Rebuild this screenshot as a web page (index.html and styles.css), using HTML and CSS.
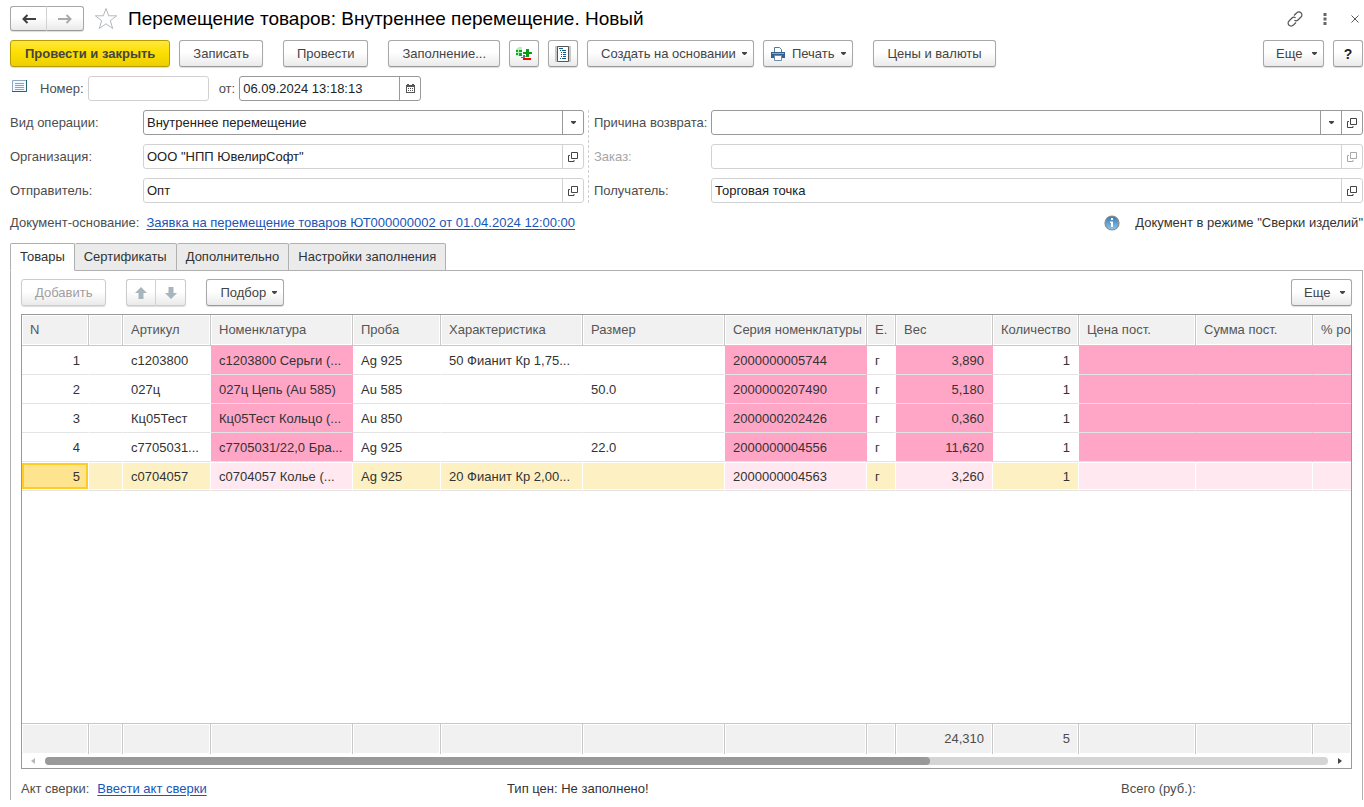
FILE: index.html
```html
<!DOCTYPE html>
<html lang="ru">
<head>
<meta charset="utf-8">
<title>Перемещение товаров: Внутреннее перемещение. Новый</title>
<link rel="stylesheet" href="styles.css">
</head>
<body>
<svg class="sprite" aria-hidden="true">
  <symbol id="open" viewBox="0 0 10 10"><path d="M3.500 .5h6v6h-6zM2 3.500H.5v6h5.500V8" fill="none" stroke="currentColor"/></symbol>
  <symbol id="caret" viewBox="0 0 5 3"><path d="M0 0h5v1L3 3H2L0 1z" fill="currentColor"/></symbol>
</svg>
<main class="page">
  <header class="title-bar">
    <div class="pair">
      <button class="btn" aria-label="Назад"><svg width="14" height="10" viewBox="0 0 14 10"><path d="M5.500 1 1.500 5l4 4M2 5h12" fill="none" stroke="#404040" stroke-width="2"/></svg></button>
      <button class="btn" aria-label="Вперед"><svg width="14" height="10" viewBox="0 0 14 10"><path d="m8.500 1 4 4-4 4M12 5H0" fill="none" stroke="#aaa" stroke-width="2"/></svg></button>
    </div>
    <button class="plain star" aria-label="Избранное"><svg width="24" height="23" viewBox="0 0 24 23"><path d="m12 1.500 2.700 7.300h8l-6.400 4.900 2.400 7.800-6.700-4.700-6.700 4.700 2.400-7.800L1.300 8.800h8z" fill="#fff" stroke="#b2b8bf"/></svg></button>
    <h1 class="title">Перемещение товаров: Внутреннее перемещение. Новый</h1>
    <div class="window-tools">
      <button class="plain" aria-label="Ссылка"><svg width="16" height="16" viewBox="0 0 16 16"><path d="M7 4.500 9.800 1.800a2.900 2.900 0 0 1 4.200 0 2.900 2.900 0 0 1 0 4.200L11 9c-1 1-2.400 1-3.600.3M9 11.500l-2.800 2.700a2.900 2.900 0 0 1-4.200 0 2.900 2.900 0 0 1 0-4.200L5 7c1-1 2.400-1 3.600-.3" fill="none" stroke="#555" stroke-width="1.200"/></svg></button>
      <button class="plain" aria-label="Меню"><svg width="4" height="12" viewBox="0 0 4 12"><path d="M.5 0h3v3h-3zM.5 4.500h3v3h-3zM.5 9h3v3h-3z" fill="#666"/></svg></button>
      <button class="plain close" aria-label="Закрыть"><svg width="8" height="8" viewBox="0 0 8 8"><path d="m.5.5 7 7m0-7-7 7" stroke="#555"/></svg></button>
    </div>
  </header>

  <div class="commands">
    <button class="btn primary">Провести и закрыть</button>
    <button class="btn">Записать</button>
    <button class="btn apart">Провести</button>
    <button class="btn apart">Заполнение...</button>
    <button class="btn icon" aria-label="Подбор строк"><svg width="18" height="16" viewBox="0 0 18 16"><path d="M1 3 4 1h3v9H1z" fill="#b8efb8"/><path d="M1 4h2v2H1zm0 3h2v2H1zm3-3h3v2H4zm0 3h3v3H4z" fill="#12a52c"/><path d="M11 3h3v3h3v2h-3v3h-3V8H8V6h3z" fill="#0a9c14"/><path d="M8 9h2v1h1l-2 3-1-1H6v-1h2z" fill="#3d7bb8"/><path d="M8 12h8v2H8z" fill="#f00"/></svg></button>
    <button class="btn icon" aria-label="Отчет"><svg width="16" height="16" viewBox="0 0 16 16"><path d="M0 0h16v16H0z" fill="#c8c8c8"/><path d="M2.500.5h11v15h-11z" fill="#fff" stroke="#555"/><path d="M4 2.500h4M5 4.500h1m1 0h4M6 6.500h1m1 0h3M6 8.500h1m1 0h3M6 10.500h1m1 0h3M5 12.500h1m1 0h4" stroke="#125b80"/></svg></button>
    <button class="btn">Создать на основании<svg class="caret"><use href="#caret"/></svg></button>
    <button class="btn print"><svg width="14" height="14" viewBox="0 0 14 14"><path d="M3.500 5V.5h5l2 2V5" fill="#fff" stroke="#50799f"/><path d="M0 5h14v6H0z" fill="#35618d"/><path d="M1 6.500h12" stroke="#86a9ca"/><path d="M3.500 8.500h7v5h-7z" fill="#fff" stroke="#6c8dac"/></svg>Печать<svg class="caret"><use href="#caret"/></svg></button>
    <button class="btn apart">Цены и валюты</button>
    <button class="btn more push">Еще<svg class="caret"><use href="#caret"/></svg></button>
    <button class="btn icon help" aria-label="Справка">?</button>
  </div>

  <div class="number-row">
    <svg class="list-icon" width="15" height="12" viewBox="0 0 15 12"><path d="M.5.5h14v11H.5z" fill="#f4f9ff" stroke="#8da9c4"/><path d="M3 3.500h9M3 5.500h9M3 7.500h9M3 9.500h9" stroke="#7fa6d0"/><path d="M14.500 0v11.500H0" fill="none" stroke="#28646c"/></svg>
    <label for="num">Номер:</label>
    <div class="field num"><input id="num"></div>
    <label for="date">от:</label>
    <div class="field strong date"><input id="date" value="06.09.2024 13:18:13"><button class="pick" aria-label="Календарь"><svg width="9" height="9" viewBox="0 0 9 9"><path d="M0 1h1V0h2v1h3V0h2v1h1v8H0z" fill="#555"/><path d="M1 3h7v5H1z" fill="#fff"/><path d="M2 4.500h5.500M2 6.500h5.500" stroke="#555" stroke-dasharray="1 1"/></svg></button></div>
  </div>

  <div class="form">
    <div class="form-side left">
      <label for="op">Вид операции:</label>
      <div class="field strong"><select id="op"><option>Внутреннее перемещение</option></select><span class="pick"><svg class="drop"><use href="#caret"/></svg></span></div>
      <label for="org">Организация:</label>
      <div class="field"><input id="org" value='ООО "НПП ЮвелирСофт"'><button class="pick" aria-label="Открыть"><svg class="open"><use href="#open"/></svg></button></div>
      <label for="from">Отправитель:</label>
      <div class="field"><input id="from" value="Опт"><button class="pick" aria-label="Открыть"><svg class="open"><use href="#open"/></svg></button></div>
    </div>
    <div class="form-side right">
      <label for="why">Причина возврата:</label>
      <div class="field strong"><select id="why"><option></option></select><span class="pick"><svg class="drop"><use href="#caret"/></svg></span><button class="pick" aria-label="Открыть"><svg class="open"><use href="#open"/></svg></button></div>
      <label for="order" class="off">Заказ:</label>
      <div class="field"><input id="order" disabled><button class="pick off" disabled aria-label="Открыть"><svg class="open"><use href="#open"/></svg></button></div>
      <label for="to">Получатель:</label>
      <div class="field"><input id="to" value="Торговая точка"><button class="pick" aria-label="Открыть"><svg class="open"><use href="#open"/></svg></button></div>
    </div>
  </div>

  <div class="basis">
    <span>Документ-основание:</span>
    <a href="#basis">Заявка на перемещение товаров ЮТ000000002 от 01.04.2024 12:00:00</a>
    <div class="mode push"><svg width="16" height="16" viewBox="0 0 16 16"><defs><linearGradient id="ball" x2="0" y2="1"><stop stop-color="#3478b0"/><stop offset="1" stop-color="#8dcaf0"/></linearGradient></defs><circle cx="8" cy="8" r="7" fill="url(#ball)" stroke="#8c8c8c" stroke-width="1.200"/><path d="M7 3h2v2H7zM6 6.500h3V12H7V8H6z" fill="#fff"/></svg><span>Документ в режиме "Сверки изделий"</span></div>
  </div>

  <div class="tabs" role="tablist">
    <button class="tab active" role="tab" aria-selected="true">Товары</button>
    <button class="tab" role="tab">Сертификаты</button>
    <button class="tab" role="tab">Дополнительно</button>
    <button class="tab" role="tab">Настройки заполнения</button>
  </div>

  <section class="panel">
    <div class="panel-bar">
      <button class="btn" disabled>Добавить</button>
      <div class="pair narrow">
        <button class="btn" disabled aria-label="Вверх"><svg width="12" height="12" viewBox="0 0 12 12"><path d="m6 0 6 6H8.500v6h-5V6H0z" fill="#a9b5bd"/></svg></button>
        <button class="btn" disabled aria-label="Вниз"><svg width="12" height="12" viewBox="0 0 12 12"><path d="m6 12 6-6H8.500V0h-5v6H0z" fill="#a9b5bd"/></svg></button>
      </div>
      <button class="btn select-items">Подбор<svg class="caret"><use href="#caret"/></svg></button>
      <button class="btn more push">Еще<svg class="caret"><use href="#caret"/></svg></button>
    </div>

    <div class="grid">
      <div class="grid-body">
        <table class="items">
          <colgroup><col class="c-n"><col class="c-mark"><col class="c-short"><col class="c-long"><col class="c-short"><col class="c-long"><col class="c-long"><col class="c-long"><col class="c-unit"><col class="c-weight"><col class="c-qty"><col class="c-sum"><col class="c-sum"><col></colgroup>
          <thead>
            <tr><th>N</th><th></th><th>Артикул</th><th>Номенклатура</th><th>Проба</th><th>Характеристика</th><th>Размер</th><th>Серия номенклатуры</th><th>Е.</th><th>Вес</th><th>Количество</th><th>Цена пост.</th><th>Сумма пост.</th><th>% ро</th></tr>
          </thead>
          <tbody>
            <tr><td class="r">1</td><td></td><td>с1203800</td><td class="pink">с1203800 Серьги (...</td><td>Ag 925</td><td>50 Фианит Кр 1,75...</td><td></td><td class="pink">2000000005744</td><td>г</td><td class="pink r">3,890</td><td class="r">1</td><td class="pink"></td><td class="pink"></td><td class="pink"></td></tr>
            <tr><td class="r">2</td><td></td><td>027ц</td><td class="pink">027ц Цепь (Au 585)</td><td>Au 585</td><td></td><td>50.0</td><td class="pink">2000000207490</td><td>г</td><td class="pink r">5,180</td><td class="r">1</td><td class="pink"></td><td class="pink"></td><td class="pink"></td></tr>
            <tr><td class="r">3</td><td></td><td>Кц05Тест</td><td class="pink">Кц05Тест Кольцо (...</td><td>Au 850</td><td></td><td></td><td class="pink">2000000202426</td><td>г</td><td class="pink r">0,360</td><td class="r">1</td><td class="pink"></td><td class="pink"></td><td class="pink"></td></tr>
            <tr><td class="r">4</td><td></td><td>с7705031...</td><td class="pink">с7705031/22,0 Бра...</td><td>Ag 925</td><td></td><td>22.0</td><td class="pink">2000000004556</td><td>г</td><td class="pink r">11,620</td><td class="r">1</td><td class="pink"></td><td class="pink"></td><td class="pink"></td></tr>
            <tr class="current"><td class="r focus">5</td><td></td><td>с0704057</td><td class="pink">с0704057 Колье (...</td><td>Ag 925</td><td>20 Фианит Кр 2,00...</td><td></td><td class="pink">2000000004563</td><td>г</td><td class="pink r">3,260</td><td class="r">1</td><td class="pink"></td><td class="pink"></td><td class="pink"></td></tr>
            <tr class="rest"><td colspan="14"></td></tr>
          </tbody>
          <tfoot>
            <tr><td></td><td></td><td></td><td></td><td></td><td></td><td></td><td></td><td></td><td class="r">24,310</td><td class="r">5</td><td></td><td></td><td></td></tr>
          </tfoot>
        </table>
      </div>
      <div class="scroll">
        <svg width="4" height="6" viewBox="0 0 4 6"><path d="M4 0v6L0 3z" fill="#b8b8b8"/></svg>
        <div class="track"><div class="thumb"></div></div>
        <svg width="4" height="6" viewBox="0 0 4 6"><path d="M0 0v6l4-3z" fill="#444"/></svg>
      </div>
    </div>

    <footer class="summary">
      <div class="act"><span>Акт сверки:</span><a href="#act">Ввести акт сверки</a></div>
      <div class="price-type">Тип цен: Не заполнено!</div>
      <div class="total">Всего (руб.):</div>
    </footer>
  </section>
</main>
</body>
</html>
```
FILE: styles.css
```css
* { box-sizing: border-box; }
body { margin: 0; background: #fff; color: #4d4d4d; font: 13px/16px "Liberation Sans", Arial, sans-serif; }
button, input, select { font: inherit; color: inherit; margin: 0; }
svg { flex: none; display: block; }
a { color: #1a55b8; text-underline-offset: 2px; }
.sprite { display: none; }
.push { margin-left: auto; }

.page { display: flex; flex-direction: column; height: 100vh; padding: 6px 1px 7px 10px; }

/* Buttons */
.btn { display: flex; align-items: center; justify-content: center; height: 27px; padding: 0 13px; border: 1px solid #a8a8a8; border-bottom-color: #999; border-radius: 3px; background: linear-gradient(#fff 45%, #eaeaea); box-shadow: 0 1px 1px #ddd; color: #444; white-space: nowrap; }
.btn:disabled { border-color: #ccc; color: #a0a0a0; }
.btn.primary { padding: 0 14px; border-color: #b89b00; background: linear-gradient(#ffe740, #fde000 45%, #eccf00); font-weight: bold; }
.btn.icon { width: 30px; padding: 0; }
.btn.help { font-size: 14px; font-weight: bold; color: #222; }
.btn.more { width: 61px; padding: 0 6px 0 12px; justify-content: space-between; }
.plain { display: flex; padding: 0; border: 0; background: none; }
.caret { width: 5px; height: 3px; margin-left: 6px; }
.btn:has(.caret) { padding-right: 6px; }
.btn.print { gap: 7px; padding-left: 7px; }
.print .caret { margin-left: 0; }
.pair { display: flex; }
.pair .btn { width: 37px; height: 25px; padding: 0; }
.pair .btn:first-child { border-radius: 3px 0 0 3px; border-right-color: #d0d0d0; }
.pair .btn:last-child { border-radius: 0 3px 3px 0; border-left: 0; }
.pair.narrow .btn { width: 30px; height: 27px; }

/* Title */
.title-bar { display: flex; align-items: center; height: 25px; }
.star { margin-left: 10px; }
.title { margin: 0 0 0 10px; color: #000; font-size: 19px; line-height: 24px; font-weight: normal; white-space: nowrap; }
.window-tools { display: flex; align-items: center; gap: 20px; margin-left: auto; }
.close { padding: 0 4px; }
.commands { display: flex; gap: 9px; margin-top: 9px; }
.apart { margin-left: 11px; }
.commands .push { margin-left: auto; }

/* Fields */
.field { display: flex; flex: 1; height: 25px; min-width: 0; border: 1px solid #d2d2d2; border-radius: 3px; background: #fff; color: #222; }
.field.strong { border-color: #999; }
.field input, .field select { flex: 1; min-width: 0; width: 0; padding: 0 3px; border: 0; outline: 0; background: none; appearance: none; opacity: 1; }
.pick { display: flex; align-items: center; justify-content: center; width: 21px; padding: 0; border: 0; border-left: 1px solid #d2d2d2; background: none; color: #444; }
.strong .pick { border-left-color: #999; }
.open { width: 10px; height: 10px; }
.drop { width: 5px; height: 3px; }
.off, .pick.off { color: #a6a6a6; }
.number-row { display: flex; align-items: center; gap: 4px; margin-top: 9px; padding-left: 2px; }
.list-icon { margin: 0 9px 6px 0; }
.number-row .field { flex: none; }
.num { width: 121px; margin-right: 6px; }
.date { width: 182px; }
.form { display: grid; grid-template-columns: 579fr 774fr; margin-top: 9px; }
.form-side { display: grid; align-items: center; row-gap: 9px; }
.left { grid-template-columns: 133px 1fr; padding-right: 4px; border-right: 1px dashed #d0d0d0; }
.right { grid-template-columns: 117px 1fr; padding-left: 5px; }
.basis { display: flex; align-items: center; gap: 7px; height: 20px; margin-top: 10px; }
.mode { display: flex; align-items: center; gap: 15px; color: #333; }

/* Tabs */
.tabs { display: flex; margin: 10px 0 -1px; position: relative; }
.tab { height: 28px; padding: 0 9px; border: 1px solid #b0b0b0; border-left-width: 0; border-radius: 2px 2px 0 0; background: #ebebeb; color: #333; white-space: nowrap; }
.tab.active { border-left-width: 1px; border-bottom-color: #fff; background: #fff; }
.panel { display: flex; flex: 1; flex-direction: column; min-height: 0; padding: 8px 10px 0; border: 1px solid #b0b0b0; border-bottom: 0; }
.panel-bar { display: flex; gap: 20px; }

/* Item grid */
.grid { display: flex; flex: 1; flex-direction: column; min-height: 0; margin-top: 8px; border: 1px solid #999; }
.grid-body { flex: 1; min-height: 0; }
.items { width: 100%; height: 100%; table-layout: fixed; border-collapse: separate; border-spacing: 0; color: #333; }
.c-n { width: 67px; }
.c-mark { width: 34px; }
.c-short { width: 88px; }
.c-long { width: 142px; }
.c-unit { width: 29px; }
.c-weight { width: 97px; }
.c-qty { width: 86px; }
.c-sum { width: 117px; }
.items th, .items td { height: 29px; padding: 0 0 0 8px; border-right: 1px solid transparent; border-bottom: 1px solid #e4e4e4; text-align: left; white-space: nowrap; overflow: hidden; }
.items tbody td { padding-top: 2px; }
.items th { height: 31px; border-color: #c8c8c8; background: #f1f1f1; box-shadow: inset 0 0 0 1px #fff; color: #555; font-weight: normal; }
.items tr > :last-child { border-right: 0; }
.items .r { padding-left: 0; padding-right: 8px; text-align: right; }
.items .pink { background: #ffa6c6; }
.items .current td { border-right-color: #fff; background: #fdf1c4; box-shadow: inset 0 1px #fff, inset 0 -1px #fff; }
.items .current .pink { background: #ffe8ef; }
.items .current .focus { background: #ffe48f; box-shadow: inset 0 1px #fff, inset 0 -1px #fff, inset 0 0 0 2px #fc2, inset 0 3px #fc2, inset 0 -3px #fc2; }
.items .rest td { height: auto; border: 0; }
.items tfoot td { height: 31px; border-top: 1px solid #c8c8c8; border-right-color: #c8c8c8; border-bottom: 0; background: #f1f1f1; box-shadow: inset 0 0 0 1px #fff; color: #4d4d4d; }
.scroll { display: flex; flex: none; align-items: center; gap: 10px; height: 14px; padding: 0 9px; }
.track { flex: 1; height: 8px; border-radius: 4px; background: #d5d5d5; }
.thumb { width: 69%; height: 8px; border-radius: 4px; background: #999; }

.summary { display: grid; grid-template-columns: 486fr 614fr 231fr; align-items: center; height: 31px; padding-top: 8px; flex: none; }
.act { display: flex; gap: 8px; }
.price-type { color: #333; }
```
